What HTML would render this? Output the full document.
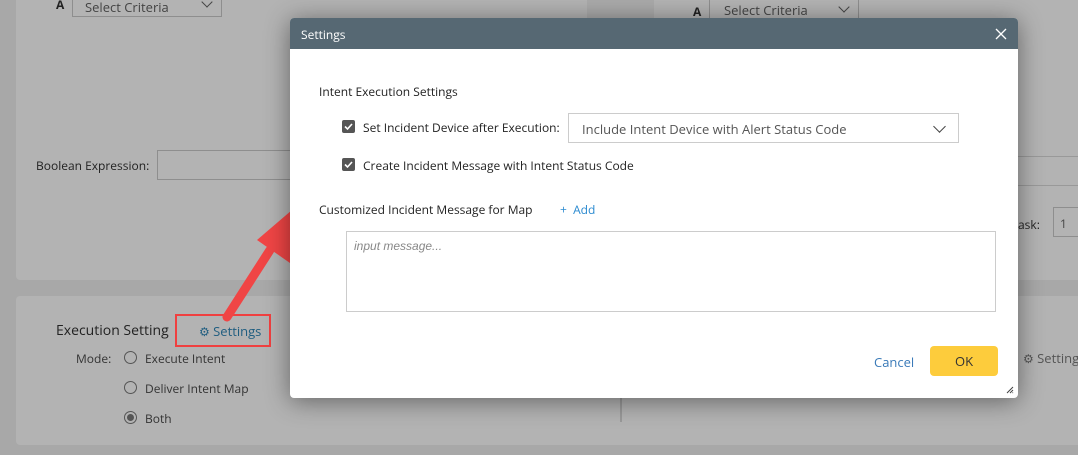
<!DOCTYPE html>
<html><head><style>
*{box-sizing:border-box;margin:0;padding:0}
body{width:1078px;height:455px;overflow:hidden;background:#a8a8a8;font-family:"Open Sans","Liberation Sans",sans-serif;font-size:12px;color:#222;position:relative}
.a{position:absolute;white-space:nowrap}
.p{background:#b3b3b3;border-radius:4px}
.bx{border:1px solid #8e8e8e}
.chev{position:absolute;width:8px;height:8px;border-right:1.3px solid #444;border-bottom:1.3px solid #444;transform:rotate(45deg)}
</style></head><body>
<div class="a p" style="left:16px;top:-5px;width:1070px;height:285px"></div>
<div class="a" style="left:587px;top:0;width:67px;height:18px;background:#aaa"></div>
<div class="a" style="left:655px;top:156px;width:430px;height:30px;border-top:1px solid #999;border-bottom:1px solid #999"></div>
<div class="a p" style="left:16px;top:296px;width:1070px;height:149px"></div>

<div class="a" style="left:56px;top:-4px;font-weight:bold">A</div>
<div class="a bx" style="left:72px;top:-6px;width:150px;height:23px;color:#444;font-size:13px;padding:3px 12px">Select Criteria <span class="chev" style="right:10px;top:3px"></span></div>
<div class="a" style="left:693px;top:3px;font-weight:bold">A</div>
<div class="a" style="left:709px;top:0;width:150px;height:18px;border-left:1px solid #8e8e8e;border-right:1px solid #8e8e8e;color:#444;font-size:13px;padding:1px 14px">Select Criteria <span class="chev" style="right:10px;top:3px"></span></div>
<div class="a" style="left:36px;top:157px">Boolean Expression:</div>
<div class="a bx" style="left:157px;top:150px;width:200px;height:30px"></div>
<div class="a" style="left:1018px;top:216px">ask:</div>
<div class="a bx" style="left:1053px;top:207px;width:40px;height:30px;padding:7px 6px;color:#444">1</div>

<div class="a" style="left:56px;top:321px;font-size:14px;color:#222">Execution Setting</div>
<div class="a" style="left:175px;top:314px;width:96px;height:33px;border:2px solid #f04040"></div>
<div class="a" style="left:199px;top:322px;font-size:13px;color:#1f5d80"><span style="font-size:12px">&#9881;</span> Settings</div>
<div class="a" style="left:76px;top:350px;color:#333">Mode:</div>
<div class="a" style="left:124px;top:351px;width:13px;height:13px;border:1px solid #555;border-radius:50%"></div>
<div class="a" style="left:145px;top:350px;color:#333">Execute Intent</div>
<div class="a" style="left:124px;top:381px;width:13px;height:13px;border:1px solid #555;border-radius:50%"></div>
<div class="a" style="left:145px;top:380px;color:#333">Deliver Intent Map</div>
<div class="a" style="left:124px;top:411px;width:13px;height:13px;border:1px solid #555;border-radius:50%"><div style="margin:2px;width:7px;height:7px;border-radius:50%;background:#555"></div></div>
<div class="a" style="left:145px;top:410px;color:#333">Both</div>
<div class="a" style="left:620px;top:398px;width:2px;height:24px;background:#999"></div>
<div class="a" style="left:1023px;top:349px;color:#555;font-size:13px"><span style="font-size:12px">&#9881;</span> Settings</div>

<svg class="a" style="left:215px;top:195px" width="90" height="135"><line x1="12" y1="122" x2="55" y2="55" stroke="#f04545" stroke-width="9" stroke-linecap="round"/><polygon points="77,15 75,68 42,45" fill="#f04545"/></svg>

<div class="a" style="left:290px;top:18px;width:728px;height:380px;background:#fff;border-radius:4px;box-shadow:0 3px 25px rgba(0,0,0,.45);overflow:hidden">
 <div style="height:31px;background:#566873;color:#fff;padding:8px 11px;font-size:12px">Settings<svg style="position:absolute;right:11px;top:10px" width="12" height="12"><path d="M1 1L11 11M11 1L1 11" stroke="#fff" stroke-width="1.3"/></svg></div>
 <div class="a" style="left:29px;top:65px;color:#222">Intent Execution Settings</div>
 <div class="a" style="left:52px;top:102px;width:13px;height:13px;background:#555;border-radius:2px"><svg width="13" height="13"><path d="M3 6.5L5.5 9L10 4" stroke="#fff" stroke-width="1.6" fill="none"/></svg></div>
 <div class="a" style="left:73px;top:101px;color:#222">Set Incident Device after Execution:</div>
 <div class="a" style="left:278px;top:95px;width:391px;height:30px;border:1px solid #ccc;padding:6px 13px;color:#555;font-size:13px">Include Intent Device with Alert Status Code<span class="chev" style="right:14px;top:8px;width:9px;height:9px"></span></div>
 <div class="a" style="left:52px;top:140px;width:13px;height:13px;background:#555;border-radius:2px"><svg width="13" height="13"><path d="M3 6.5L5.5 9L10 4" stroke="#fff" stroke-width="1.6" fill="none"/></svg></div>
 <div class="a" style="left:73px;top:139px;color:#222">Create Incident Message with Intent Status Code</div>
 <div class="a" style="left:29px;top:183px;color:#222">Customized Incident Message for Map</div>
 <div class="a" style="left:270px;top:183px;color:#2a8ad0">+&nbsp; Add</div>
 <div class="a" style="left:56px;top:213px;width:650px;height:81px;border:1px solid #ccc;padding:7px;color:#888;font-style:italic;font-family:'Liberation Sans',sans-serif">input message...</div>
 <div class="a" style="left:584px;top:335px;color:#3a7ab8;font-size:13px">Cancel</div>
 <div class="a" style="left:640px;top:328px;width:68px;height:30px;background:#fdcc3c;border-radius:4px;text-align:center;line-height:30px;font-size:13px;color:#333">OK</div>
 <svg class="a" style="right:4px;bottom:4px" width="8" height="8"><path d="M7 1L1 7M7 4L4 7M7 6.5L6.5 7" stroke="#444" stroke-width="1"/></svg>
</div>
</body></html>
